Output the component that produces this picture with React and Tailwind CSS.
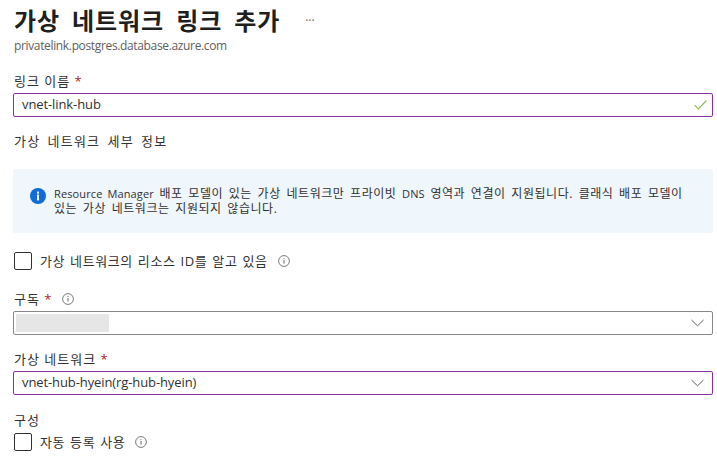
import React from 'react';

const font = { fontFamily: '"Open Sans", "Noto Sans CJK KR", sans-serif' };
const heading = 'text-[13px] tracking-[1.2px] [word-spacing:2.7px]';
const fieldLabel = 'text-[13px] tracking-[1px]';
const checkLabel = 'text-[13px] tracking-[0.6px] [word-spacing:1px]';

function InfoDot() {
  return (
    <svg viewBox="0 0 12 12" className="w-3 h-3 shrink-0 text-[#6b6b6b]" fill="none">
      <circle cx="6" cy="6" r="5.4" stroke="currentColor" strokeWidth="0.9" />
      <rect x="5.5" y="5" width="1" height="3.6" fill="currentColor" />
      <rect x="5.5" y="3.1" width="1" height="1" fill="currentColor" />
    </svg>
  );
}

function Chevron() {
  return (
    <svg viewBox="0 0 14 8" className="w-[13px] h-[8px]" fill="none" stroke="#505050" strokeWidth="1">
      <path d="M0.5 0.8 L7 7 L13.5 0.8" />
    </svg>
  );
}

function Required() {
  return <span className="text-[#a4262c]">*</span>;
}

function Checkbox({ label, mt }) {
  return (
    <div className={`flex items-center ${mt}`}>
      <span className="w-[18px] h-[18px] ml-px rounded-[2px] border border-[#323130] shrink-0" />
      <span className={`ml-2 leading-[18px] text-[#323130] ${checkLabel}`}>{label}</span>
      <span className="ml-[10px]"><InfoDot /></span>
    </div>
  );
}

export default function App() {
  return (
    <div className="w-[717px] h-[461px] overflow-hidden bg-white pl-[13px] pr-1 text-[#323130]" style={font}>
      <div className="flex items-center pt-[3px] h-[38px]">
        <h1 className="text-[24px] leading-[32px] font-semibold tracking-[0.9px] [word-spacing:5px] ml-px text-[#201f1e]">가상 네트워크 링크 추가</h1>
        <span className="ml-[25px] text-[12px] leading-none text-[#605e5c]">···</span>
      </div>
      <div className="text-[12px] leading-4 ml-px text-[#605e5c] tracking-[-0.35px]">privatelink.postgres.database.azure.com</div>

      <label className={`block mt-[18px] ml-px leading-[18px] ${fieldLabel}`}>링크 이름 <Required /></label>
      <div className="mt-[3px] h-6 flex items-center justify-between border border-[#8a2da5] rounded-[2px] pl-2 pr-[5px] text-[13px]">
        <span className="tracking-[-0.1px]">vnet-link-hub</span>
        <svg viewBox="0 0 13 10" className="w-[13px] h-[10px]" fill="none" stroke="#7fba3a" strokeWidth="1.1">
          <path d="M0.6 5 L4.3 9 L12.4 0.7" />
        </svg>
      </div>

      <div className={`mt-[14px] ml-px leading-[20px] ${heading}`}>가상 네트워크 세부 정보</div>

      <div className="mt-[18px] h-[64px] flex items-center bg-[#eff6fc] rounded-[2px] pl-[17px] pr-[24px]">
        <svg viewBox="0 0 16 16" className="w-4 h-4 shrink-0 -mt-[11px]">
          <circle cx="8" cy="8" r="8" fill="#0f6cd8" />
          <rect x="7" y="6.6" width="2" height="5.8" fill="#fff" />
          <rect x="7" y="3.6" width="2" height="2" fill="#fff" />
        </svg>
        <p className="ml-2 text-[12px] leading-[15px] tracking-[0.55px] [word-spacing:2px] whitespace-nowrap text-[#323130]">
          <span className="text-[11px] tracking-[0.12px]">Resource Manager</span> 배포 모델이 있는 가상 네트워크만 프라이빗 <span className="text-[11px] tracking-[0.12px]">DNS</span> 영역과 연결이 지원됩니다. 클래식 배포 모델이
          <br />
          있는 가상 네트워크는 지원되지 않습니다.
        </p>
      </div>

      <Checkbox label="가상 네트워크의 리소스 ID를 알고 있음" mt="mt-[19px]" />

      <div className="mt-[20px] ml-px flex items-center leading-[18px]">
        <span className={fieldLabel}>구독 <Required /></span>
        <span className="ml-[10px]"><InfoDot /></span>
      </div>
      <div className="mt-[3px] h-6 flex items-center justify-between border border-[#8a8886] rounded-[2px] pl-[2px] pr-[8px]">
        <span className="w-[93px] h-[18px] bg-[#e6e6e6]" />
        <Chevron />
      </div>

      <label className={`block mt-[15px] ml-px leading-[18px] ${fieldLabel}`}>가상 네트워크 <Required /></label>
      <div className="mt-[3px] h-6 flex items-center justify-between border border-[#8a2da5] rounded-[2px] pl-2 pr-[8px] text-[13px]">
        <span className="tracking-[-0.1px]">vnet-hub-hyein(rg-hub-hyein)</span>
        <Chevron />
      </div>

      <div className={`mt-[16px] ml-px leading-[18px] ${fieldLabel}`}>구성</div>
      <Checkbox label="자동 등록 사용" mt="mt-[4px]" />
    </div>
  );
}
